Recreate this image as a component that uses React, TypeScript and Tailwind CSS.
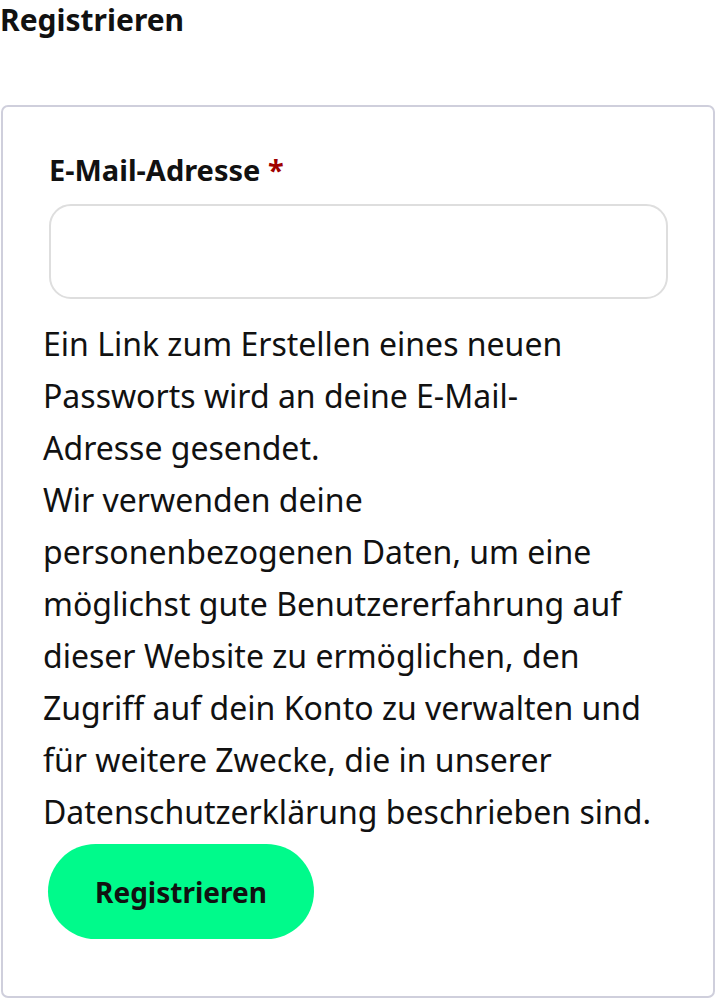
const lines = [
  'Ein Link zum Erstellen eines neuen',
  'Passworts wird an deine E-Mail-',
  'Adresse gesendet.',
  'Wir verwenden deine',
  'personenbezogenen Daten, um eine',
  'möglichst gute Benutzererfahrung auf',
  'dieser Website zu ermöglichen, den',
  'Zugriff auf dein Konto zu verwalten und',
  'für weitere Zwecke, die in unserer',
  'Datenschutzerklärung beschrieben sind.',
]

export default function App() {
  return (
    <div className="w-[716px] h-[1000px] bg-white text-[#111111] font-['Noto_Sans',sans-serif]">
      <h2 className="text-[30px] font-bold leading-[40px]">Registrieren</h2>

      <div className="mt-[65px] mx-[1px] h-[893px] rounded-[7px] border-2 border-[#cfcfdc] pt-[46px] pr-[45px]">
        <label className="block pl-[46px] text-[29px] font-bold leading-[34px]">
          E-Mail-Adresse <span className="text-[#a00000]">*</span>
        </label>
        <input
          type="email"
          className="mt-[17px] ml-[46px] block h-[95px] w-[619px] rounded-[22px] border-2 border-[#dedede] bg-white outline-none"
        />

        <p className="mt-[19px] pl-[40px] text-[32px] leading-[52px]">
          {lines.map((l) => (
            <span key={l} className="block whitespace-nowrap">
              {l}
            </span>
          ))}
        </p>

        <button className="mt-[6px] ml-[45px] h-[95px] w-[266px] rounded-full bg-[#00fa8b] text-[28px] font-bold text-[#111111]">
          Registrieren
        </button>
      </div>
    </div>
  )
}
